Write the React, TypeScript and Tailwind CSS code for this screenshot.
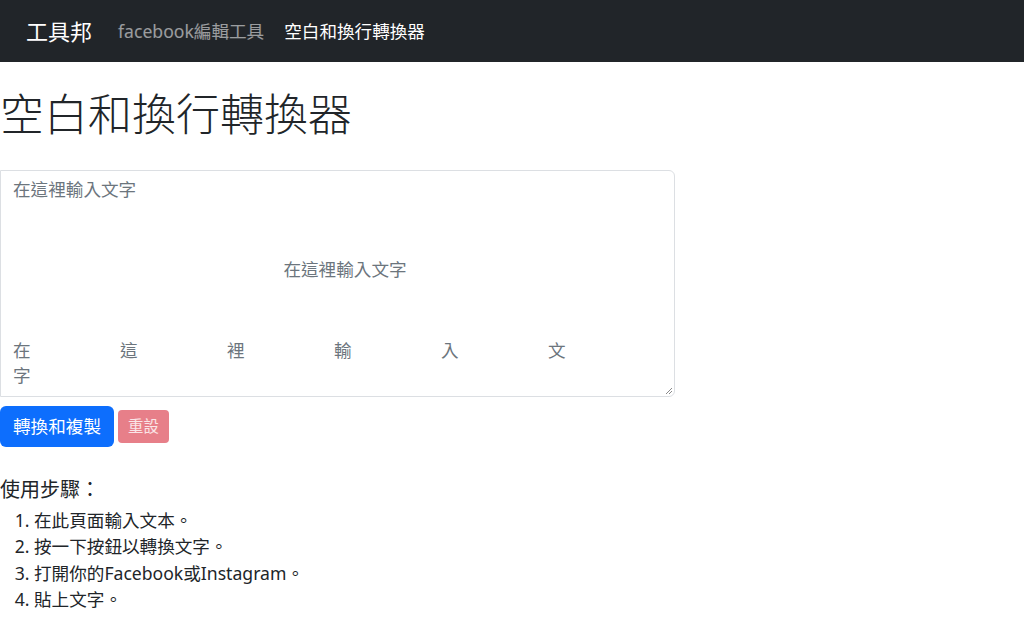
const font = { fontFamily: '"Noto Sans", "Noto Sans CJK TC", sans-serif' };

const spaced = ["在", "這", "裡", "輸", "入", "文", "字"];

const steps = [
  "在此頁面輸入文本。",
  "按一下按鈕以轉換文字。",
  "打開你的Facebook或Instagram。",
  "貼上文字。",
];

export default function App() {
  return (
    <div className="min-h-[620px] bg-white text-[#212529]" style={font}>
      <nav className="h-[62px] bg-[#212529] flex items-center pl-[26px]">
        <span className="text-[22px] text-white mr-[26px]">工具邦</span>
        <span className="text-[17.6px] text-white/55 mr-[20px]">facebook編輯工具</span>
        <span className="text-[17.6px] text-white">空白和換行轉換器</span>
      </nav>

      <h1 className="text-[44px] font-light leading-none mt-[30px] mb-[34px] text-[#212529]">
        空白和換行轉換器
      </h1>

      <div className="relative w-[675px] h-[227px] border border-[#dcdfe3] rounded-r-[6px] pt-[5px] pl-[12px] pr-[12px] text-[17.6px] leading-[26.4px] text-[#6c757d]">
        <div>在這裡輸入文字</div>
        <div className="text-center mt-[54px] pl-[15px]">在這裡輸入文字</div>
        <div className="flex flex-wrap mt-[55px] w-[650px]">
          {spaced.map((c, i) => (
            <span key={i} className="w-[107px] leading-[25px]">
              {c}
            </span>
          ))}
        </div>
        <svg className="absolute right-[1px] bottom-[1px]" width="8" height="8" viewBox="0 0 8 8">
          <path d="M7 1 L1 7 M7 4 L4 7" stroke="#8a8a8a" strokeWidth="1" />
        </svg>
      </div>

      <div className="flex items-center gap-[4px] mt-[9px]">
        <button className="h-[41px] px-[13px] bg-[#0d6efd] text-white text-[17.6px] rounded-[6px]">
          轉換和複製
        </button>
        <button className="h-[33px] px-[10px] bg-[#e77f89] text-white/80 text-[15.4px] rounded-[4px]">
          重設
        </button>
      </div>

      <div className="mt-[28px] text-[20px] leading-[30px]">使用步驟：</div>
      <ol className="list-decimal pl-[34px] mt-[2px] text-[17.6px] leading-[26.4px]">
        {steps.map((s) => (
          <li key={s}>{s}</li>
        ))}
      </ol>
    </div>
  );
}
